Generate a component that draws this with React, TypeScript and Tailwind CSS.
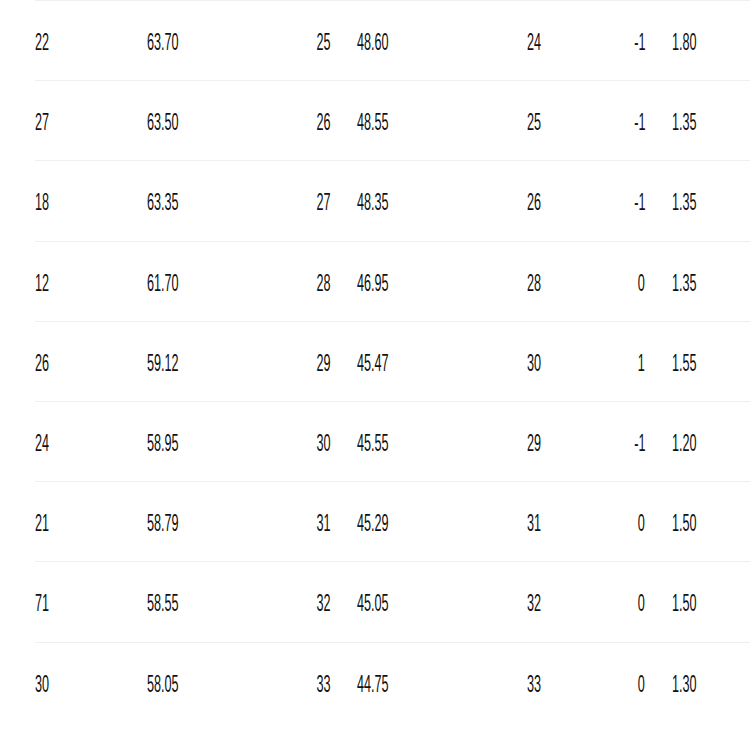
import React from "react";

const rows: string[][] = [
  ["22", "63.70", "25", "48.60", "24", "-1", "1.80"],
  ["27", "63.50", "26", "48.55", "25", "-1", "1.35"],
  ["18", "63.35", "27", "48.35", "26", "-1", "1.35"],
  ["12", "61.70", "28", "46.95", "28", "0", "1.35"],
  ["26", "59.12", "29", "45.47", "30", "1", "1.55"],
  ["24", "58.95", "30", "45.55", "29", "-1", "1.20"],
  ["21", "58.79", "31", "45.29", "31", "0", "1.50"],
  ["71", "58.55", "32", "45.05", "32", "0", "1.50"],
  ["30", "58.05", "33", "44.75", "33", "0", "1.30"],
];

function L({ t }: { t: string }) {
  return <span className="inline-block origin-left scale-x-[0.55]">{t}</span>;
}
function R({ t }: { t: string }) {
  return <span className="inline-block origin-right scale-x-[0.55]">{t}</span>;
}

export default function App() {
  return (
    <div
      className="w-[750px] h-[750px] overflow-hidden bg-white text-[#111111] text-[23px] leading-none"
      style={{ fontFamily: '"Liberation Sans", Arial, sans-serif' }}
    >
      <div className="ml-[35px]">
        {rows.map((r, i) => (
          <div
            key={i}
            className="flex items-center h-[80.2px] pt-[4px] whitespace-nowrap border-t border-[#efefef]"
          >
            <div className="w-[112px] shrink-0"><L t={r[0]} /></div>
            <div className="w-[144px] shrink-0"><L t={r[1]} /></div>
            <div className="w-[40px] shrink-0 text-right"><R t={r[2]} /></div>
            <div className="w-[196px] shrink-0 pl-[26px]"><L t={r[3]} /></div>
            <div className="w-[78px] shrink-0"><L t={r[4]} /></div>
            <div className="w-[40px] shrink-0 text-right"><R t={r[5]} /></div>
            <div className="pl-[27px]"><L t={r[6]} /></div>
          </div>
        ))}
      </div>
    </div>
  );
}
